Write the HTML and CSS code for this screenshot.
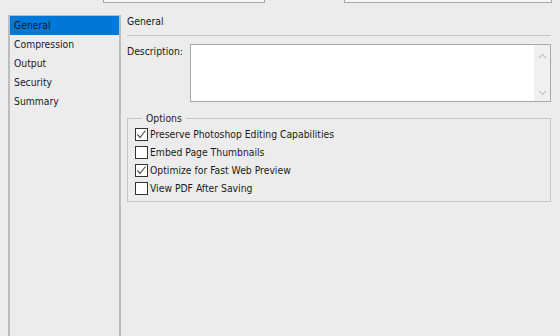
FILE: index.html
```html
<!DOCTYPE html>
<html>
<head>
<meta charset="utf-8">
<link rel="stylesheet" href="styles.css">
</head>
<body>
<div class="topbar">
  <div class="topfield f1"></div>
  <div class="topfield f2"></div>
</div>
<div class="main">
  <ul class="navlist">
    <li class="sel">General</li>
    <li>Compression</li>
    <li>Output</li>
    <li>Security</li>
    <li>Summary</li>
  </ul>
  <div class="content">
    <div class="header">General</div>
    <div class="descrow">
      <label class="desclabel">Description:</label>
      <div class="textarea">
        <div class="scroll">
          <svg width="9" height="6" viewBox="0 0 9 6"><path d="M1 5 L4.5 1.5 L8 5" fill="none" stroke="#c4c4c4" stroke-width="1.2"/></svg>
          <svg width="9" height="6" viewBox="0 0 9 6"><path d="M1 1 L4.5 4.5 L8 1" fill="none" stroke="#c4c4c4" stroke-width="1.2"/></svg>
        </div>
      </div>
    </div>
    <fieldset class="options">
      <legend>Options</legend>
      <div class="chk"><span class="box on"><svg width="11" height="11" viewBox="0 0 11 11"><path d="M1.5 5.5 L4 8.5 L9.5 1.5" fill="none" stroke="#555" stroke-width="1.2"/></svg></span>Preserve Photoshop Editing Capabilities</div>
      <div class="chk"><span class="box"></span>Embed Page Thumbnails</div>
      <div class="chk"><span class="box on"><svg width="11" height="11" viewBox="0 0 11 11"><path d="M1.5 5.5 L4 8.5 L9.5 1.5" fill="none" stroke="#555" stroke-width="1.2"/></svg></span>Optimize for Fast Web Preview</div>
      <div class="chk"><span class="box"></span>View PDF After Saving</div>
    </fieldset>
  </div>
</div>
</body>
</html>
```
FILE: styles.css
```css
html, body {
  margin: 0;
  padding: 0;
  background: #ececec;
  width: 560px;
  height: 336px;
  overflow: hidden;
  font-family: "DejaVu Sans Condensed", "DejaVu Sans", sans-serif;
  font-stretch: condensed;
  font-size: 10.3px;
  color: #1a1a1a;
}
.topbar {
  height: 3px;
  display: flex;
}
.topfield {
  height: 2px;
  background: #f6f6f6;
  border: 1px solid #a9a9a9;
  border-top: none;
}
.f1 { margin-left: 103px; width: 160px; }
.f2 { margin-left: 79px; width: 206px; }
.main {
  display: flex;
  padding-top: 12px;
}
.navlist {
  list-style: none;
  margin: 0 0 0 8px;
  padding: 0;
  width: 109px;
  height: 330px;
  border: 2px solid #bdbdbd;
  border-bottom: none;
  border-top: 1px solid #bdbdbd;
}
.navlist li {
  height: 19px;
  line-height: 18px;
  padding-left: 4px;
}
.navlist li.sel {
  background: #0078d7;
  color: #1a1a1a;
}
.content {
  margin-left: 6px;
  width: 424px;
}
.header {
  height: 20px;
  line-height: 13px;
  border-bottom: 1px solid #c8c8c8;
}
.descrow {
  display: flex;
  margin-top: 8px;
}
.desclabel {
  width: 63px;
  line-height: 14px;
}
.textarea {
  flex: 1;
  height: 56px;
  background: #fff;
  border: 1px solid #a8a8a8;
  display: flex;
  justify-content: flex-end;
}
.scroll {
  width: 16px;
  background: #f0f0f0;
  display: flex;
  flex-direction: column;
  justify-content: space-between;
  align-items: center;
  padding: 8px 0 5px;
}
.options {
  margin: 10px 0 0;
  padding: 1px 0 5px 7px;
  border: 1px solid #c6c6c6;
  box-sizing: border-box;
  height: 90px;
}
.options legend {
  margin-left: 7px;
  padding: 0 4px;
  line-height: 12px;
}
.chk {
  display: flex;
  align-items: center;
  height: 18px;
}
.box {
  width: 11px;
  height: 11px;
  border: 1px solid #333;
  background: #fff;
  margin-right: 2px;
  display: flex;
  align-items: center;
  justify-content: center;
}
.box.on svg { display: block; }
```
